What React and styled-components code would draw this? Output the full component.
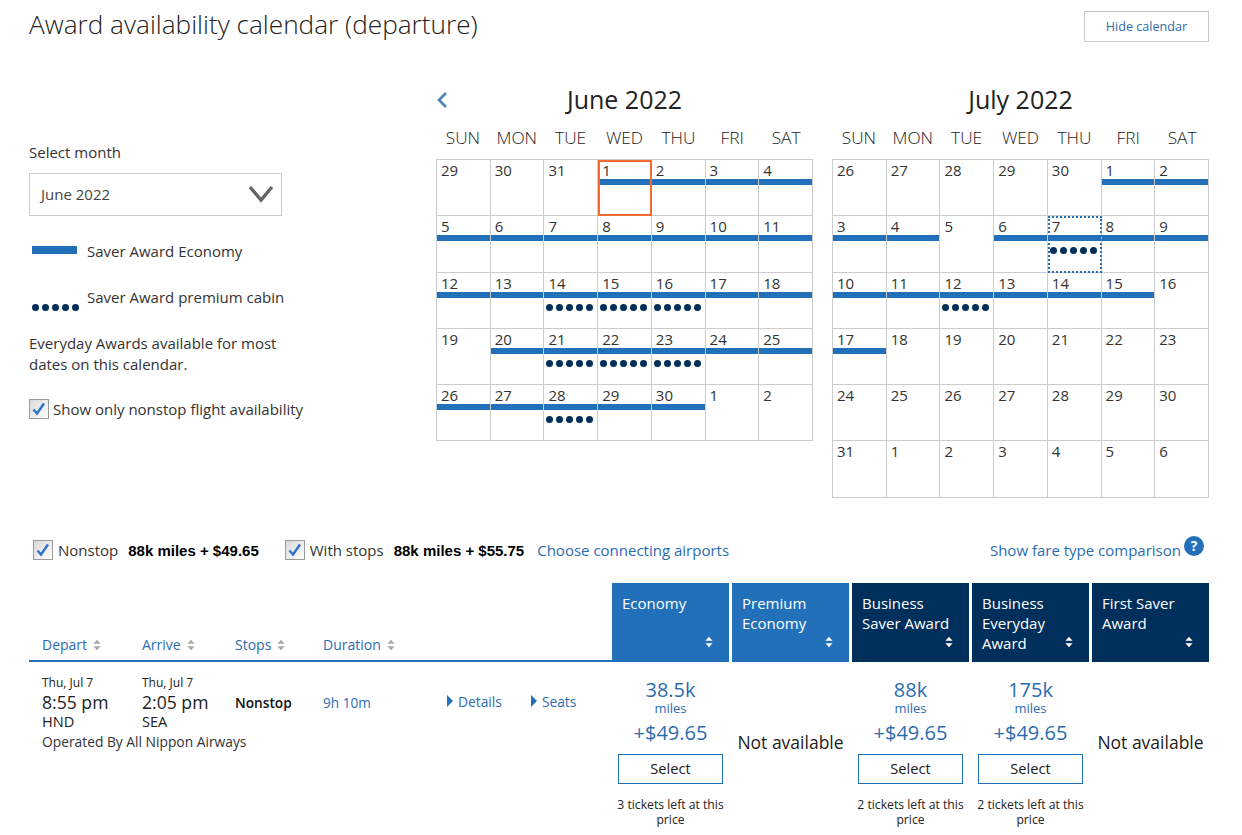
import React from 'react';
import styled, { createGlobalStyle } from 'styled-components';

const Global = createGlobalStyle`
  html, body { margin: 0; padding: 0; background: #fff; }
  body { font-family: "Open Sans", "Liberation Sans", sans-serif; color: #222; font-size: 15px; }
  * { box-sizing: border-box; }
`;

const Page = styled.div`
  width: 1242px;
  height: 835px;
  overflow: hidden;
  padding: 11px 33px 0 29px;
`;
const Header = styled.header`
  display: flex;
  justify-content: space-between;
  align-items: flex-start;
  height: 31px;
`;
const Title = styled.h1`
  margin: -4px 0 0;
  font-size: 26.2px;
  line-height: 34px;
  font-weight: 300;
  color: #222;
`;
const HideButton = styled.button`
  width: 125px;
  height: 31px;
  padding: 0;
  border: 1px solid #c8c8c8;
  background: #fff;
  color: #2b6cb0;
  font: 400 12.6px "Open Sans", sans-serif;
`;
const Top = styled.section`
  display: flex;
  margin-top: 43px;
  height: 453px;
`;
const Side = styled.aside`
  width: 407px;
  padding-top: 57px;
`;
const SideLabel = styled.div`
  font-size: 15px;
  line-height: 20px;
  color: #333;
`;
const MonthSelect = styled.div`
  width: 253px;
  height: 43px;
  margin-top: 11px;
  padding: 0 7px 2px 11px;
  border: 1px solid #ccc;
  display: flex;
  align-items: center;
  justify-content: space-between;
  font-size: 15px;
  color: #444;
`;
const LegendRow = styled.div`
  display: flex;
  align-items: ${p => p.$dots ? 'flex-start' : 'center'};
  gap: ${p => p.$dots ? '8px' : '10px'};
  margin: ${p => p.$top} 0 0 3px;
  height: 20px;
  font-size: 15px;
  color: #333;
  line-height: 20px;
`;
const LegendBar = styled.span`
  width: 45px;
  height: 8px;
  background: #2270b9;
  margin-top: -3px;
`;
const LegendDots = styled.span`
  display: flex;
  gap: 3px;
  width: 47px;
  margin-top: 17px;
`;
const Dot = styled.i`
  display: block;
  width: 7px;
  height: 7px;
  border-radius: 50%;
  background: #002f5c;
`;
const Note = styled.p`
  margin: 26px 0 0;
  width: 270px;
  font-size: 15px;
  line-height: 21px;
  color: #333;
`;
const CheckRow = styled.label`
  display: flex;
  align-items: center;
  gap: ${p => p.$gap || '4px'};
  margin-left: ${p => p.$left || 0};
  font-size: 15px;
  color: #333;
  margin-top: ${p => p.$top || 0};
`;
const Months = styled.div`
  display: flex;
  gap: 19px;
`;
const Month = styled.div`
  width: 377px;
`;
const MonthHead = styled.div`
  display: grid;
  grid-template-columns: 1fr auto 1fr;
  align-items: center;
  height: 30px;
`;
const MonthTitle = styled.h2`
  margin: -2px 0 0;
  font-size: 25px;
  font-weight: 400;
  line-height: 30px;
  color: #222;
`;
const Weekdays = styled.div`
  display: grid;
  grid-template-columns: repeat(7, 1fr);
  margin-top: 11px;
  height: 33px;
`;
const Weekday = styled.div`
  text-align: center;
  font-size: 17.3px;
  line-height: 24px;
  font-weight: 300;
  color: #222;
`;
const Grid = styled.div`
  display: grid;
  grid-template-columns: repeat(7, 1fr);
  grid-auto-rows: 56.3px;
  border-top: 1px solid #ccc;
  border-left: 1px solid #ccc;
`;
const Cell = styled.div`
  position: relative;
  border-right: 1px solid #ccc;
  border-bottom: 1px solid #ccc;
  padding-top: 1px;
`;
const DayNum = styled.div`
  height: 18px;
  padding-left: 4px;
  font-size: 15px;
  line-height: 19px;
  color: #333;
  font-weight: 400;
`;
const Bar = styled.div`
  height: 6px;
  background: #2270b9;
`;
const CellDots = styled.div`
  display: flex;
  gap: 3px;
  margin: 6px 0 0 2px;
`;
const Outline = styled.div`
  position: absolute;
  inset: 0 -1px -1px 0;
  border: ${p => p.$selected ? '2px dotted #2270b9' : '2px solid #f26a2e'};
  pointer-events: none;
`;
const Filters = styled.div`
  display: flex;
  align-items: center;
  height: 24px;
  padding-left: 4px;
`;
const Bold = styled.strong`
  font: 700 15px "Liberation Sans", Arial, sans-serif;
  color: #000;
  margin-left: 10px;
`;
const Link = styled.a`
  color: #2b6cb0;
  font-size: 15px;
`;
const FilterLink = styled(Link)`
  margin-left: 13px;
`;
const FareLink = styled(Link)`
  margin-left: auto;
  display: flex;
  align-items: center;
  gap: 3px;
  margin-right: 5px;
`;
const HelpWrap = styled.span`
  display: block;
  height: 20px;
  margin-top: -8px;
`;
const TableHead = styled.div`
  display: flex;
  margin-top: 21px;
  height: 79px;
`;
const SortBar = styled.div`
  width: 583px;
  border-bottom: 2px solid #2270b9;
  display: grid;
  grid-template-columns: 100px 93px 88px 1fr;
  padding: 0 0 6px 13px;
  align-items: end;
  height: 79px;
`;
const SortLabel = styled.div`
  display: flex;
  align-items: center;
  gap: 6px;
  color: #2b6cb0;
  font-size: 14px;
  line-height: 19px;
`;
const FareHeads = styled.div`
  display: grid;
  grid-template-columns: repeat(5, 117px);
  gap: 3px;
`;
const FareHead = styled.div`
  position: relative;
  background: ${p => p.$dark ? '#002f5c' : '#2270b9'};
  color: #fff;
  font-size: 15px;
  line-height: 20px;
  padding: 10px 9px 0 10px;
`;
const SortCorner = styled.span`
  position: absolute;
  right: 16px;
  top: 53px;
  line-height: 0;
`;
const Row = styled.div`
  display: flex;
`;
const FlightInfo = styled.div`
  width: 583px;
  padding: 13px 0 0 13px;
`;
const FlightCols = styled.div`
  display: grid;
  grid-template-columns: 100px 93px 88px 123px auto 1fr;
  align-items: center;
`;
const Stack = styled.div`
  color: #222;
`;
const SmallDate = styled.div`
  font-size: 12px;
  line-height: 16px;
`;
const Time = styled.div`
  font-size: 17.6px;
  line-height: 22px;
  font-weight: 400;
`;
const Code = styled.div`
  font-size: 14.6px;
  line-height: 17px;
`;
const StopsText = styled.div`
  font-size: 13.7px;
  font-weight: 600;
  color: #111;
`;
const Dur = styled.div`
  color: #2b6cb0;
  font-size: 13.6px;
`;
const Toggle = styled.div`
  display: flex;
  align-items: center;
  gap: 4px;
  color: #2b6cb0;
  font-size: 13.8px;
  margin-right: 28px;
  margin-top: -3px;
`;
const Operated = styled.div`
  font-size: 13.8px;
  line-height: 20px;
  margin-top: 2px;
  color: #333;
`;
const Fares = styled.div`
  display: grid;
  grid-template-columns: repeat(5, 117px);
  gap: 3px;
`;
const Fare = styled.div`
  text-align: center;
  padding-top: 15px;
`;
const Miles = styled.div`
  font-size: 20px;
  line-height: 26px;
  color: #2b6cb0;
`;
const MilesUnit = styled.div`
  font-size: 13px;
  line-height: 14px;
  margin-top: -2px;
  color: #2b6cb0;
`;
const Taxes = styled.div`
  font-size: 20px;
  line-height: 26px;
  color: #2b6cb0;
  margin-top: 5px;
`;
const SelectBtn = styled.button`
  display: block;
  width: 105px;
  height: 30px;
  margin: 8px auto 0;
  padding: 0 0 2px;
  background: #fff;
  border: 1px solid #2270b9;
  color: #222;
  font: 400 14.7px "Open Sans", sans-serif;
`;
const Left = styled.div`
  font-size: 12.2px;
  line-height: 15px;
  color: #222;
  margin: 13px -3px 0;
  white-space: pre-line;
`;
const NotAvail = styled.div`
  text-align: center;
  font-size: 17.5px;
  color: #222;
  padding-top: 68px;
  line-height: 24px;
`;

const Dots = ({ as: W = CellDots }) => (
  <W>{[0, 1, 2, 3, 4].map(i => <Dot key={i} />)}</W>
);

const Sort = ({ c = '#a8a8a8' }) => (
  <svg width="8" height="12" viewBox="0 0 9 13"><path d="M4.5 0.5 8.5 5H.5zM4.5 12.5 .5 8h8z" fill={c} /></svg>
);

const Check = () => (
  <svg width="20" height="20" viewBox="0 0 20 20">
    <defs>
      <linearGradient id="cbg" x1="0" y1="0" x2="1" y2="1"><stop offset="0" stopColor="#d8d8d8" /><stop offset="1" stopColor="#fff" /></linearGradient>
    </defs>
    <rect x=".5" y=".5" width="19" height="19" fill="url(#cbg)" stroke="#9a9a9a" />
    <path d="M4.5 10.5 8 14.5 15 4.5" fill="none" stroke="#2f74c8" strokeWidth="2.4" />
  </svg>
);

const range = (a, b) => { const r = []; for (let i = a; i <= b; i++) r.push(i); return r; };

const june = [
  ...[29, 30, 31].map(d => ({ d })),
  ...range(1, 30).map(d => ({
    d,
    bar: d !== 19,
    dots: [14, 15, 16, 21, 22, 23, 28].includes(d),
    outline: d === 1 ? 'today' : null,
  })),
  { d: 1 }, { d: 2 },
];
const julyBars = [1, 2, 3, 4, 6, 7, 8, 9, 10, 11, 12, 13, 14, 15, 17];
const july = [
  ...[26, 27, 28, 29, 30].map(d => ({ d })),
  ...range(1, 31).map(d => ({
    d,
    bar: julyBars.includes(d),
    dots: d === 7 || d === 12,
    outline: d === 7 ? 'sel' : null,
  })),
  ...range(1, 6).map(d => ({ d })),
];
const days = ['SUN', 'MON', 'TUE', 'WED', 'THU', 'FRI', 'SAT'];

const Calendar = ({ title, cells, back }) => (
  <Month>
    <MonthHead>
      <div>
        {back && (
          <svg width="14" height="18" viewBox="0 0 14 18" style={{ display: 'block' }}>
            <path d="M10 2 3 9l7 7" fill="none" stroke="#4a80bd" strokeWidth="2.6" />
          </svg>
        )}
      </div>
      <MonthTitle>{title}</MonthTitle>
      <div />
    </MonthHead>
    <Weekdays>{days.map(d => <Weekday key={d}>{d}</Weekday>)}</Weekdays>
    <Grid>
      {cells.map((c, i) => (
        <Cell key={i}>
          <DayNum>{c.d}</DayNum>
          {c.bar && <Bar />}
          {c.dots && <Dots />}
          {c.outline && <Outline $selected={c.outline === 'sel'} />}
        </Cell>
      ))}
    </Grid>
  </Month>
);

const heads = [
  ['Economy', false], ['Premium Economy', false], ['Business Saver Award', true],
  ['Business Everyday Award', true], ['First Saver Award', true],
];
const fares = [
  { m: '38.5k', left: '3 tickets left at this\nprice' },
  null,
  { m: '88k', left: '2 tickets left at this\nprice' },
  { m: '175k', left: '2 tickets left at this\nprice' },
  null,
];

export default function App() {
  return (
    <Page>
      <Global />
      <Header>
        <Title>Award availability calendar (departure)</Title>
        <HideButton>Hide calendar</HideButton>
      </Header>
      <Top>
        <Side>
          <SideLabel>Select month</SideLabel>
          <MonthSelect>
            June 2022
            <svg width="26" height="18" viewBox="0 0 26 18"><path d="M2 2 13 15 24 2" fill="none" stroke="#666" strokeWidth="3.4" /></svg>
          </MonthSelect>
          <LegendRow $top="25px"><LegendBar />Saver Award Economy</LegendRow>
          <LegendRow $top="26px" $dots><Dots as={LegendDots} />Saver Award premium cabin</LegendRow>
          <Note>Everyday Awards available for most dates on this calendar.</Note>
          <CheckRow $top="24px"><Check />Show only nonstop flight availability</CheckRow>
        </Side>
        <Months>
          <Calendar title="June 2022" cells={june} back />
          <Calendar title="July 2022" cells={july} />
        </Months>
      </Top>
      <Filters>
        <CheckRow $gap="5px"><Check />Nonstop</CheckRow>
        <Bold>88k miles + $49.65</Bold>
        <CheckRow $gap="5px" $left="26px"><Check />With stops</CheckRow>
        <Bold>88k miles + $55.75</Bold>
        <FilterLink>Choose connecting airports</FilterLink>
        <FareLink>
          Show fare type comparison
          <HelpWrap>
            <svg width="20" height="20" viewBox="0 0 20 20">
              <circle cx="10" cy="10" r="10" fill="#2270b9" />
              <text x="10" y="15" textAnchor="middle" fontFamily="Open Sans" fontWeight="700" fontSize="14" fill="#fff">?</text>
            </svg>
          </HelpWrap>
        </FareLink>
      </Filters>
      <TableHead>
        <SortBar>
          {['Depart', 'Arrive', 'Stops', 'Duration'].map(l => <SortLabel key={l}>{l}<Sort /></SortLabel>)}
        </SortBar>
        <FareHeads>
          {heads.map(([t, dark]) => (
            <FareHead key={t} $dark={dark}>{t}<SortCorner><Sort c="#fff" /></SortCorner></FareHead>
          ))}
        </FareHeads>
      </TableHead>
      <Row>
        <FlightInfo>
          <FlightCols>
            <Stack><SmallDate>Thu, Jul 7</SmallDate><Time>8:55 pm</Time><Code>HND</Code></Stack>
            <Stack><SmallDate>Thu, Jul 7</SmallDate><Time>2:05 pm</Time><Code>SEA</Code></Stack>
            <StopsText>Nonstop</StopsText>
            <Dur>9h 10m</Dur>
            <Toggle>
              <svg width="8" height="14" viewBox="0 0 8 14"><path d="M1 1 7 7 1 13z" fill="#2270b9" /></svg>Details
            </Toggle>
            <Toggle>
              <svg width="8" height="14" viewBox="0 0 8 14"><path d="M1 1 7 7 1 13z" fill="#2270b9" /></svg>Seats
            </Toggle>
          </FlightCols>
          <Operated>Operated By All Nippon Airways</Operated>
        </FlightInfo>
        <Fares>
          {fares.map((f, i) => f ? (
            <Fare key={i}>
              <Miles>{f.m}</Miles>
              <MilesUnit>miles</MilesUnit>
              <Taxes>+$49.65</Taxes>
              <SelectBtn>Select</SelectBtn>
              <Left>{f.left}</Left>
            </Fare>
          ) : <NotAvail key={i}>Not available</NotAvail>)}
        </Fares>
      </Row>
    </Page>
  );
}
